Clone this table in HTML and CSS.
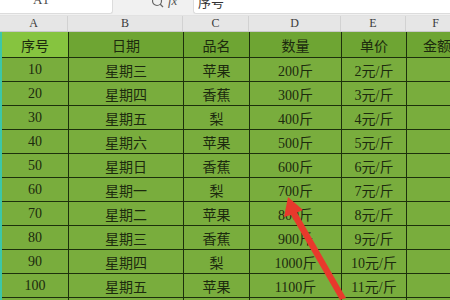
FILE: index.html
```html
<!DOCTYPE html>
<html lang="zh">
<head>
<meta charset="utf-8">
<link rel="stylesheet" href="styles.css">
</head>
<body>
<div class="page">
  <div class="topbar">
    <div class="namebox"><span>A1</span></div>
    <div class="tools">
      <svg class="search" width="12" height="12" viewBox="0 0 12 12"><circle cx="5" cy="2" r="4.5" fill="none" stroke="#666" stroke-width="1.2"/><line x1="8" y1="5" x2="11" y2="8" stroke="#666" stroke-width="1.2"/></svg>
      <span class="fx">fx</span>
    </div>
    <div class="formula"><span>序号</span></div>
  </div>
  <div class="colheads">
    <div class="ch">A</div><div class="ch">B</div><div class="ch">C</div><div class="ch">D</div><div class="ch">E</div><div class="ch">F</div>
  </div>
  <div class="sheet">
    <div class="c h first">序号</div><div class="c h">日期</div><div class="c h">品名</div><div class="c h">数量</div><div class="c h">单价</div><div class="c h">金额</div>
    <div class="c">10</div><div class="c">星期三</div><div class="c">苹果</div><div class="c">200斤</div><div class="c">2元/斤</div><div class="c"></div>
    <div class="c">20</div><div class="c">星期四</div><div class="c">香蕉</div><div class="c">300斤</div><div class="c">3元/斤</div><div class="c"></div>
    <div class="c">30</div><div class="c">星期五</div><div class="c">梨</div><div class="c">400斤</div><div class="c">4元/斤</div><div class="c"></div>
    <div class="c">40</div><div class="c">星期六</div><div class="c">苹果</div><div class="c">500斤</div><div class="c">5元/斤</div><div class="c"></div>
    <div class="c">50</div><div class="c">星期日</div><div class="c">香蕉</div><div class="c">600斤</div><div class="c">6元/斤</div><div class="c"></div>
    <div class="c">60</div><div class="c">星期一</div><div class="c">梨</div><div class="c">700斤</div><div class="c">7元/斤</div><div class="c"></div>
    <div class="c">70</div><div class="c">星期二</div><div class="c">苹果</div><div class="c">800斤</div><div class="c">8元/斤</div><div class="c"></div>
    <div class="c">80</div><div class="c">星期三</div><div class="c">香蕉</div><div class="c">900斤</div><div class="c">9元/斤</div><div class="c"></div>
    <div class="c">90</div><div class="c">星期四</div><div class="c">梨</div><div class="c">1000斤</div><div class="c">10元/斤</div><div class="c"></div>
    <div class="c">100</div><div class="c">星期五</div><div class="c">苹果</div><div class="c">1100斤</div><div class="c">11元/斤</div><div class="c"></div>
    <div class="c"></div><div class="c"></div><div class="c"></div><div class="c"></div><div class="c"></div><div class="c"></div>
  </div>
  <svg class="arrow" width="450" height="300" viewBox="0 0 450 300">
    <polygon points="288,197 303,210 297,212.5 346,298 340,300 291,215 284,217" fill="#e8392c"/>
  </svg>
</div>
</body>
</html>
```

FILE: styles.css
```css
* { box-sizing: border-box; }
html, body { margin: 0; padding: 0; }
body {
  width: 450px;
  height: 300px;
  overflow: hidden;
  background: #f2f2f2;
  font-family: "Liberation Serif", "Noto Sans CJK SC", serif;
}
.page {
  position: relative;
  width: 450px;
  height: 300px;
  overflow: hidden;
}
.topbar {
  display: flex;
  height: 16px;
  background: #f1f1f1;
  border-bottom: 1px solid #e2e2e2;
}
.namebox {
  width: 113px;
  height: 14px;
  background: #fff;
  border: 1px solid #dcdcdc;
  border-top: none;
  border-left: none;
  border-bottom-right-radius: 3px;
  position: relative;
  overflow: hidden;
}
.namebox span {
  position: absolute;
  left: 33px;
  top: -8px;
  font-size: 13px;
  color: #444;
}
.tools {
  width: 80px;
  display: flex;
  align-items: flex-start;
  padding-left: 39px;
  gap: 4px;
  overflow: hidden;
  height: 14px;
}
.search { margin-top: -1px; }
.fx {
  font-style: italic;
  font-size: 13px;
  color: #555;
  margin-top: -7px;
}
.formula {
  flex: 1;
  height: 14px;
  background: #fff;
  border: 1px solid #dcdcdc;
  border-top: none;
  border-right: none;
  border-bottom-left-radius: 3px;
  position: relative;
  overflow: hidden;
}
.formula span {
  position: absolute;
  left: 4px;
  top: -8px;
  font-size: 13px;
  color: #333;
}
.colheads {
  display: grid;
  grid-template-columns: 68px 115px 66px 92px 65px 60px;
  height: 16px;
  background: #e6e6e6;
  border-bottom: 1px solid #c9c9c9;
}
.ch {
  border-right: 1px solid #d2d2d2;
  text-align: center;
  font-size: 12px;
  line-height: 15px;
  color: #3a3a3a;
}
.sheet {
  display: grid;
  grid-template-columns: 66px 114px 65px 91px 64px 60px;
  grid-template-rows: 25px repeat(11, 23px);
  gap: 1px;
  background: #1d300c;
  border-left: 2px solid #3cc7a8;
  padding-bottom: 1px;
}
.c {
  background: #79ad3d;
  display: flex;
  align-items: center;
  justify-content: center;
  font-size: 14px;
  color: #1c2a0e;
  white-space: nowrap;
}
.c.h { background: #6ea533; }
.c.h.first { background: #86c43f; }
.arrow {
  position: absolute;
  left: 0;
  top: 0;
}
```
